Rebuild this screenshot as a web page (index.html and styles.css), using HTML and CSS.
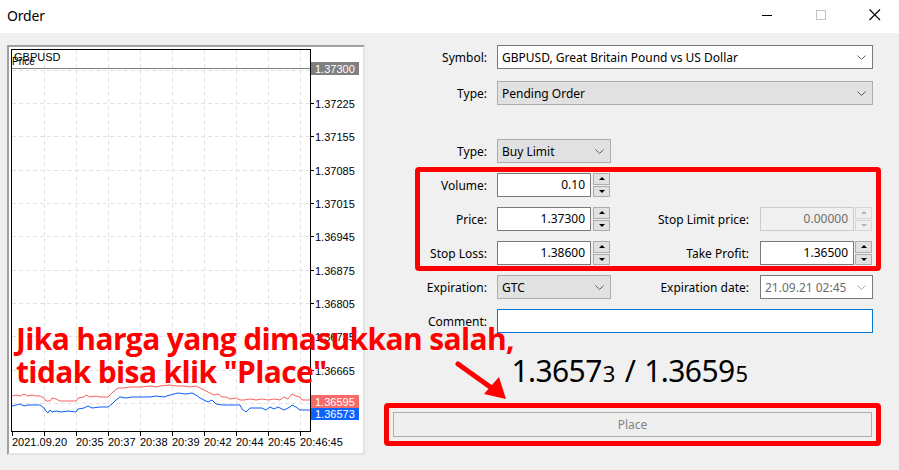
FILE: index.html
```html
<!DOCTYPE html>
<html>
<head>
<meta charset="utf-8">
<title>Order</title>
<link rel="stylesheet" href="styles.css">
</head>
<body>
<div class="window">
  <div class="titlebar">
    <span class="title">Order</span>
    <div class="controls">
      <span class="ctl"><svg width="11" height="11" viewBox="0 0 11 11"><line x1="0" y1="5.5" x2="10" y2="5.5" stroke="#000" stroke-width="1"/></svg></span>
      <span class="ctl"><svg width="11" height="11" viewBox="0 0 11 11"><rect x="0.5" y="0.5" width="9" height="9" fill="none" stroke="#c4c4c4"/></svg></span>
      <span class="ctl"><svg width="12" height="12" viewBox="0 0 12 12"><path d="M0.5 0.5 L11 11 M11 0.5 L0.5 11" stroke="#000" stroke-width="1.1" fill="none"/></svg></span>
    </div>
  </div>

  <div class="main">
    <div class="chart-panel">
      <svg class="chart" width="354" height="406" viewBox="9 47 354 406">
        <rect x="9" y="47" width="354" height="406" fill="#fff"/>
        <g stroke="#e2e2e2" stroke-width="1" stroke-dasharray="4 3" fill="none">
          <path d="M44.5 50V431M76.5 50V431M108.5 50V431M140.5 50V431M172.5 50V431M204.5 50V431M236.5 50V431M268.5 50V431M300.5 50V431"/>
          <path d="M12 70.5H310M12 103.5H310M12 136.5H310M12 170.5H310M12 203.5H310M12 236.5H310M12 270.5H310M12 303.5H310M12 336.5H310M12 370.5H310M12 403.5H310"/>
        </g>
        <line x1="12" y1="68.5" x2="310" y2="68.5" stroke="#808080" stroke-width="1"/>
        <polyline fill="none" stroke="#f56262" stroke-width="1" points="12,396 16,395 20,396 24,394 28,396 32,395 36,396 40,396 44,398 46,401 50,401 52,398 56,399 60,401 76,401 78,398 84,397 86,395 90,397 96,396 100,397 108,397 110,395 114,391 118,388 124,388 130,387 140,387 150,386 156,387 160,386 170,385 176,386 184,386 190,387 196,386 200,388 206,391 210,393 214,395 218,394 222,397 226,397 230,399 236,398 240,400 244,400 250,399 256,400 262,399 268,400 274,399 280,400 284,397 288,399 292,394 296,396 300,397 302,400 310,400"/>
        <polyline fill="none" stroke="#0a5cff" stroke-width="1" points="12,406 16,405 20,404 24,406 28,405 40,405 44,408 46,411 48,413 50,410 52,412 56,411 62,412 68,411 76,412 78,409 84,408 88,406 92,408 100,407 108,407 112,404 116,400 120,397 126,398 132,397 140,397 150,397 156,396 164,397 170,395 178,393 186,394 192,393 196,395 200,398 204,400 208,402 212,400 216,404 222,405 240,405 242,409 246,412 250,408 256,408 262,408 266,410 270,407 274,409 278,407 284,410 290,407 292,405 296,407 300,410 310,410"/>
        <rect x="11.5" y="49.5" width="299" height="382" fill="none" stroke="#000" stroke-width="1"/>
        <g stroke="#000" stroke-width="1">
          <path d="M310 103.5h4M310 136.5h4M310 170.5h4M310 203.5h4M310 236.5h4M310 270.5h4M310 303.5h4M310 336.5h4M310 370.5h4"/>
          <path d="M12.5 432v4M44.5 432v4M76.5 432v4M108.5 432v4M140.5 432v4M172.5 432v4M204.5 432v4M236.5 432v4M268.5 432v4M300.5 432v4"/>
        </g>
        <g class="axis">
          <text x="14" y="61">GBPUSD</text>
          <text x="12" y="65" class="small">Price</text>
          <text x="315" y="108">1.37225</text>
          <text x="315" y="141">1.37155</text>
          <text x="315" y="175">1.37085</text>
          <text x="315" y="208">1.37015</text>
          <text x="315" y="241">1.36945</text>
          <text x="315" y="275">1.36875</text>
          <text x="315" y="308">1.36805</text>
          <text x="315" y="341">1.36735</text>
          <text x="315" y="375">1.36665</text>
          <text x="12" y="446">2021.09.20</text>
          <text x="76" y="446">20:35</text>
          <text x="108" y="446">20:37</text>
          <text x="140" y="446">20:38</text>
          <text x="172" y="446">20:39</text>
          <text x="204" y="446">20:42</text>
          <text x="236" y="446">20:44</text>
          <text x="268" y="446">20:45</text>
          <text x="300" y="446">20:46:45</text>
        </g>
        <rect x="311" y="62" width="48" height="13" fill="#808080"/>
        <rect x="311" y="395" width="48" height="13" fill="#f66a6a"/>
        <rect x="311" y="408" width="48" height="12" fill="#0d63ff"/>
        <g class="axis" fill="#fff">
          <text x="315" y="73">1.37300</text>
          <text x="315" y="406">1.36595</text>
          <text x="315" y="418">1.36573</text>
        </g>
      </svg>
    </div>

    <div class="form">
      <div class="row">
        <div class="lbl">Symbol:</div>
        <div class="select white w-wide">GBPUSD, Great Britain Pound vs US Dollar<svg class="chev" width="9" height="5" viewBox="0 0 9 5"><polyline points="0.5,0.5 4.5,4.5 8.5,0.5"/></svg></div>
      </div>
      <div class="row mt12">
        <div class="lbl">Type:</div>
        <div class="select gray w-wide">Pending Order<svg class="chev" width="9" height="5" viewBox="0 0 9 5"><polyline points="0.5,0.5 4.5,4.5 8.5,0.5"/></svg></div>
      </div>
      <div class="row mt34">
        <div class="lbl">Type:</div>
        <div class="select gray w-small">Buy Limit<svg class="chev" width="9" height="5" viewBox="0 0 9 5"><polyline points="0.5,0.5 4.5,4.5 8.5,0.5"/></svg></div>
      </div>

      <div class="redbox params">
        <div class="prow">
          <div class="plbl">Volume:</div>
          <div class="field">0.10</div>
          <div class="spin"><span class="up"></span><span class="down"></span></div>
        </div>
        <div class="prow">
          <div class="plbl">Price:</div>
          <div class="field">1.37300</div>
          <div class="spin"><span class="up"></span><span class="down"></span></div>
          <div class="plbl2">Stop Limit price:</div>
          <div class="field disabled">0.00000</div>
          <div class="spin disabled sp-r"><span class="up"></span><span class="down"></span></div>
        </div>
        <div class="prow">
          <div class="plbl">Stop Loss:</div>
          <div class="field">1.38600</div>
          <div class="spin"><span class="up"></span><span class="down"></span></div>
          <div class="plbl2">Take Profit:</div>
          <div class="field">1.36500</div>
          <div class="spin sp-r"><span class="up"></span><span class="down"></span></div>
        </div>
      </div>

      <div class="row mt4">
        <div class="lbl">Expiration:</div>
        <div class="select gray w-small">GTC<svg class="chev" width="9" height="5" viewBox="0 0 9 5"><polyline points="0.5,0.5 4.5,4.5 8.5,0.5"/></svg></div>
        <div class="lbl2">Expiration date:</div>
        <div class="select white dis w-date">21.09.21 02:45<svg class="chev light" width="9" height="5" viewBox="0 0 9 5"><polyline points="0.5,0.5 4.5,4.5 8.5,0.5"/></svg></div>
      </div>
      <div class="row mt10">
        <div class="lbl">Comment:</div>
        <div class="comment"></div>
      </div>

      <div class="quote">1.3657<span class="sm">3</span><span class="slash">/</span>1.3659<span class="sm">5</span></div>

      <div class="redbox placebox">
        <div class="place">Place</div>
      </div>
    </div>
  </div>

  <div class="annotation">Jika harga yang dimasukkan salah,<br>tidak bisa klik "Place"</div>
  <svg class="arrow" width="60" height="45" viewBox="452 358 60 45">
    <line x1="458" y1="364" x2="493" y2="389" stroke="#ff0000" stroke-width="5" stroke-linecap="round"/>
    <polygon points="506,399 484,394 499,377" fill="#ff0000"/>
  </svg>
</div>
</body>
</html>
```
FILE: styles.css
```css
html, body {
  margin: 0;
  padding: 0;
}
body {
  background: #f0f0f0;
  font-family: "Noto Sans", "Open Sans", sans-serif;
  font-size: 12px;
  color: #000;
}
.window {
  position: relative;
  width: 899px;
  height: 470px;
  overflow: hidden;
}

/* title bar */
.titlebar {
  height: 33px;
  background: #fff;
  display: flex;
  align-items: center;
  justify-content: space-between;
}
.title {
  padding-left: 7px;
  font-size: 14px;
  margin-top: -3px;
  letter-spacing: -0.2px;
}
.controls {
  display: flex;
  margin-right: -3px;
  margin-top: -3px;
}
.ctl {
  width: 54px;
  height: 24px;
  display: flex;
  align-items: center;
  justify-content: center;
}

/* main */
.main {
  display: flex;
  padding-top: 12px;
}
.chart-panel {
  margin-left: 7px;
  width: 354px;
  height: 406px;
  border-style: solid;
  border-width: 2px;
  border-color: #a0a0a0 #e3e3e3 #e3e3e3 #a0a0a0;
}
.chart {
  display: block;
}
.axis text {
  font-family: "Liberation Sans", Arial, sans-serif;
  font-size: 11px;
}
.axis text.small {
  font-size: 10px;
}

/* form */
.form {
  width: 497px;
  margin-left: 19px;
  display: flex;
  flex-direction: column;
}
.row {
  display: flex;
  align-items: center;
  height: 24px;
}
.mt12 { margin-top: 12px; }
.mt34 { margin-top: 34px; }
.mt4 { margin-top: 4px; }
.mt10 { margin-top: 10px; }
.lbl {
  width: 103px;
  margin-right: 10px;
  text-align: right;
}
.lbl2 {
  width: 138px;
  margin-right: 11px;
  text-align: right;
}
.select {
  box-sizing: border-box;
  height: 24px;
  display: flex;
  align-items: center;
  padding-left: 4px;
  border: 1px solid #7a7a7a;
}
.select.white { background: #fff; }
.select.gray { background: #e1e1e1; border-color: #adadad; }
.select.dis { color: #6d6d6d; }
.w-wide { width: 376px; }
.w-small { width: 114px; }
.w-date { width: 113px; }
.chev {
  margin-left: auto;
  margin-right: 6px;
}
.chev polyline {
  fill: none;
  stroke: #5a5a5a;
  stroke-width: 1;
}
.chev.light polyline { stroke: #a8a8a8; }

.comment {
  box-sizing: border-box;
  width: 376px;
  height: 24px;
  background: #fff;
  border: 1px solid #0078d7;
}

/* red boxes */
.redbox {
  box-sizing: border-box;
  border: 5px solid #ff0000;
  border-radius: 4px;
}
.params {
  margin-top: 4px;
  margin-left: 31px;
  width: 466px;
  padding: 1px 4px 1px 0;
  display: flex;
  flex-direction: column;
  gap: 10px;
}
.prow {
  display: flex;
  align-items: center;
  height: 24px;
}
.plbl {
  width: 67px;
  margin-right: 10px;
  text-align: right;
}
.plbl2 {
  width: 139px;
  margin-right: 11px;
  text-align: right;
}
.field {
  box-sizing: border-box;
  width: 94px;
  height: 24px;
  background: #fff;
  border: 1px solid #7a7a7a;
  text-align: right;
  padding-right: 5px;
  line-height: 22px;
}
.field.disabled {
  background: #f0f0f0;
  border-color: #cccccc;
  color: #6d6d6d;
}
.spin {
  width: 17px;
  height: 24px;
  margin-left: 2px;
  display: flex;
  flex-direction: column;
  gap: 1px;
}
.spin.sp-r { margin-left: 1px; }
.spin span {
  flex: 1;
  box-sizing: border-box;
  border: 1px solid #adadad;
  background: #e1e1e1;
  display: flex;
  align-items: center;
  justify-content: center;
}
.spin span::after {
  content: "";
  width: 0;
  height: 0;
  border-left: 3px solid transparent;
  border-right: 3px solid transparent;
}
.spin .up::after { border-bottom: 3px solid #000; }
.spin .down::after { border-top: 3px solid #000; }
.spin.disabled span {
  background: #f0f0f0;
  border-color: #d6d6d6;
}
.spin.disabled .up::after { border-bottom-color: #b4b4b4; }
.spin.disabled .down::after { border-top-color: #b4b4b4; }

/* quote */
.quote {
  margin-top: 16px;
  height: 44px;
  line-height: 44px;
  font-size: 30px;
  letter-spacing: -0.6px;
  text-align: center;
  padding-right: 6px;
}
.quote .sm {
  font-size: 22px;
  margin-left: 1px;
}
.slash {
  margin: 0 9px 0 10px;
}

.placebox {
  margin-top: 10px;
  width: 497px;
  padding: 4px;
}
.place {
  box-sizing: border-box;
  height: 25px;
  border: 1px solid #adadad;
  background: #efefef;
  color: #838383;
  text-align: center;
  line-height: 23px;
}

/* overlay annotation */
.annotation {
  position: absolute;
  left: 16px;
  top: 322px;
  font-family: "Open Sans", "Noto Sans", sans-serif;
  font-weight: bold;
  font-size: 30px;
  letter-spacing: -0.65px;
  line-height: 33px;
  color: #ff0000;
  white-space: nowrap;
}
.arrow {
  position: absolute;
  left: 452px;
  top: 358px;
}
```
